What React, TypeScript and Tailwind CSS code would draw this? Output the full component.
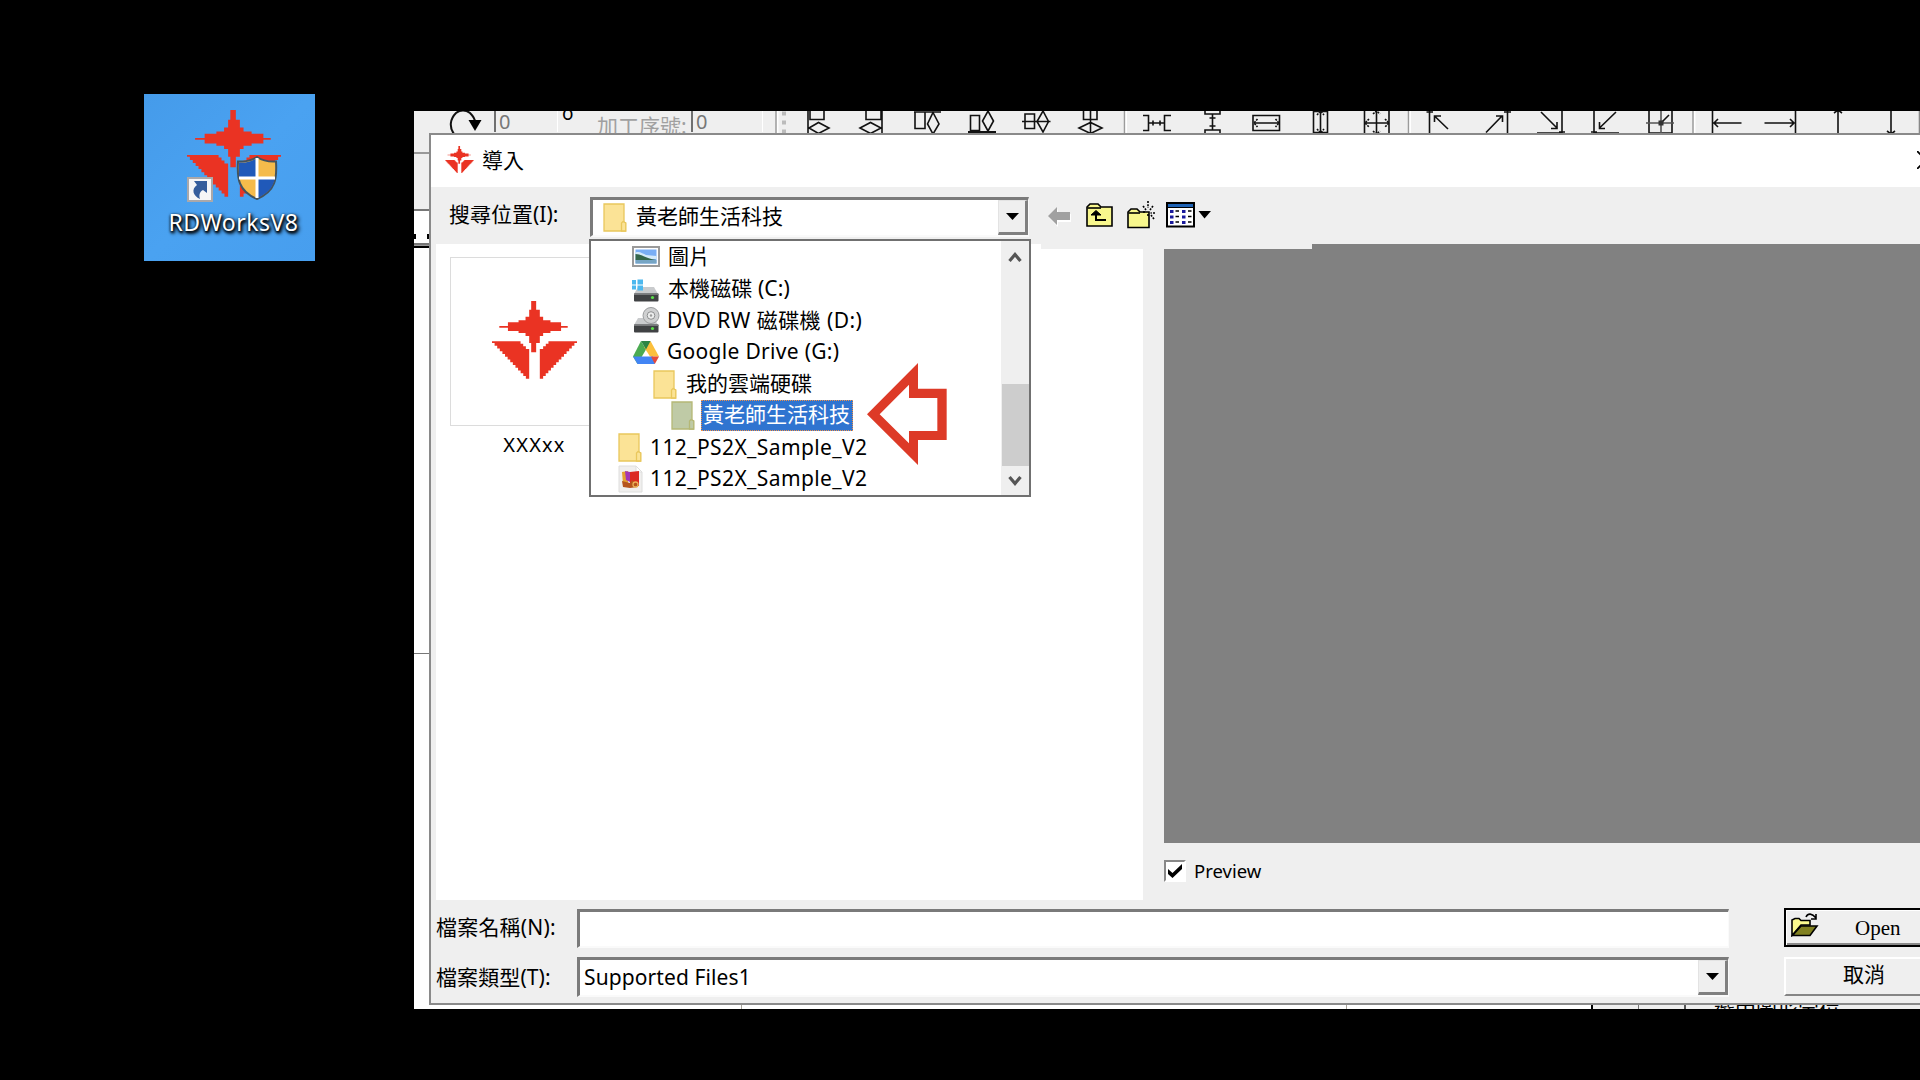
import React, { ReactNode } from "react";

const STAR =
  "394,242 409,242 409,268 420,268 420,289 430,289 430,300 452,300 452,306 484,306 484,317 504,317 504,322 484,322 484,332 452,332 452,338 430,338 430,347 420,347 420,368 409,368 409,396 394,396 394,368 388,368 388,347 377,347 377,338 356,338 356,332 324,332 324,322 298,322 298,317 324,317 324,306 356,306 356,300 377,300 377,289 388,289 388,268 394,268";

const wing = (() => {
  let pts = "388,475 388,386 378,386 378,378 370,378 370,370 362,370 362,363 276,363";
  const n = 13;
  for (let i = 0; i < n; i++) {
    const x = 276 + (i * 102) / n;
    const y = 368 + (i * 107) / n;
    pts += ` ${x},${y} ${x + 102 / n},${y}`;
  }
  return pts + " 378,475";
})();

function Logo({ className }: { className: string }) {
  return (
    <svg className={className} viewBox="276 242 256 234" preserveAspectRatio="none" fill="#ea3323">
      <polygon points={STAR} />
      <polygon points={wing} />
      <polygon points={wing} transform="translate(808 0) scale(-1 1)" />
    </svg>
  );
}

function Folder({ open = false }: { open?: boolean }) {
  const fill = open ? "#bfcaa6" : "#fbe396";
  const edge = open ? "#b5b876" : "#e9c75c";
  return (
    <svg className="h-[29px] w-[24px] shrink-0" viewBox="0 0 24 29">
      <path d="M1 1H21V19L22.5 20V28H1Z" fill={fill} stroke={edge} strokeWidth="1.3" />
      <path d="M18.5 28V20L20 18.5L22.8 20V28Z" fill={fill} stroke={edge} strokeWidth="1.3" />
    </svg>
  );
}

function PictureIcon() {
  return (
    <svg className="h-[21px] w-[28px] shrink-0" viewBox="0 0 28 21">
      <rect x="1" y="1" width="26" height="19" fill="#fff" stroke="#9a9a9a" strokeWidth="2" />
      <rect x="3.5" y="3.5" width="21" height="14" fill="#79aef5" />
      <path d="M3.5 6.500C8 5 11 8 14 9L24.500 10V13H3.500Z" fill="#d3e9fa" />
      <path d="M3.500 8C9 8 13 12 24 14H3.500Z" fill="#35664b" />
      <path d="M3.500 14H24.500V17.500H3.500Z" fill="#76a5c4" />
    </svg>
  );
}

function DriveIcon({ kind }: { kind: "win" | "dvd" }) {
  return (
    <svg className="h-[26px] w-[28px] shrink-0" viewBox="0 0 28 26">
      <path d="M6 11H22L26 18H2Z" fill="#c9cbcd" />
      <rect x="2" y="17.500" width="24.500" height="8" rx="1" fill="#404244" />
      <rect x="2" y="17.500" width="24.500" height="1.500" fill="#77797b" />
      <circle cx="20.500" cy="21.500" r="1.600" fill="#5be04a" />
      {kind === "win" ? (
        <g fill="#4db8ee">
          <rect x="0" y="4" width="4" height="4.500" />
          <rect x="5.500" y="3.500" width="5.500" height="5" />
          <rect x="0" y="9.500" width="4" height="4" />
          <rect x="5.500" y="9.500" width="5.500" height="5" />
        </g>
      ) : (
        <g>
          <circle cx="19" cy="8.500" r="8" fill="#cfd0d1" stroke="#9a9c9e" />
          <circle cx="19" cy="8.500" r="3.800" fill="#eceded" stroke="#8d8f90" />
          <circle cx="19" cy="8.500" r="1.200" fill="#9a9a9a" />
        </g>
      )}
    </svg>
  );
}

function GoogleDrive() {
  return (
    <svg className="h-[25px] w-[28px] shrink-0" viewBox="0 0 28 25">
      <path d="M9 1L14 9.500L5.500 24L1 16.500Z" fill="#4bab52" />
      <path d="M18.500 1L27 16.500H18L12 7Z" fill="#fbbf3c" />
      <path d="M9 1H18.500L14 9.500Z" fill="#2d8544" />
      <path d="M1 16.500H21L23 24H5.500Z" fill="#4285f4" />
      <path d="M19 16.500H27L22.800 24Z" fill="#e5493a" />
    </svg>
  );
}

function ZipIcon() {
  return (
    <svg className="h-[28px] w-[25px] shrink-0" viewBox="0 0 25 28">
      <path d="M1 1H18L24 7V27H1Z" fill="#f0efee" stroke="#dededd" />
      <path d="M18 1V7H24Z" fill="#fff" stroke="#dededd" />
      <path d="M4 7L10 6V20L5 19Z" fill="#e3a02f" />
      <path d="M7 6L12 7V17L8 15Z" fill="#a335b5" />
      <path d="M12 7L21 6V21L12 20Z" fill="#dc2a22" />
      <path d="M4 16L12 18L14 15L17 18L20 19V22L12 23L5 22Z" fill="#b5541d" />
      <circle cx="17.500" cy="19.500" r="2.500" fill="none" stroke="#eab257" strokeWidth="1.300" />
    </svg>
  );
}

/* Toolbar glyphs: every cell is a slice of one drawing space whose top is y=111. */
function Cell({ x, to, children }: { x: number; to: number; children?: ReactNode }) {
  return (
    <svg
      className="h-[22px] shrink-0"
      width={to - x}
      viewBox={`${x} 111 ${to - x} 22`}
      fill="none"
      stroke="#111"
      strokeWidth="1.6"
    >
      {children}
    </svg>
  );
}
const Sep = ({ x }: { x: number }) => (
  <>
    <path d={`M${x} 111V134`} stroke="#9b9b9b" strokeWidth="1.5" />
    <path d={`M${x + 1.700} 111V134`} stroke="#fff" strokeWidth="1.5" />
  </>
);

function Toolbar() {
  return (
    <div className="ml-[16px] flex h-[22px] overflow-hidden bg-[#efefef]">
      <Cell x={430} to={494}>
        <path d="M454 134C449 127 450 119 456 113Q463 108 470 113Q475 118 475 122" strokeWidth="2" />
        <path d="M468.500 120H481.500L475 131Z" fill="#000" stroke="none" />
      </Cell>
      <div className="flex h-[21px] w-[64px] border-r border-l-2 border-r-white border-l-[#707070] pl-[3px] font-['Noto_Sans'] text-[20px] leading-[22px] text-[#777]">0</div>
      <div className="w-[39px] pl-[4px] font-['Noto_Sans'] text-[19px] leading-[5px] text-black">o</div>
      <div className="h-[22px] w-[94px] overflow-hidden whitespace-nowrap font-['Noto_Sans','Noto_Sans_CJK_TC',sans-serif] text-[21px] leading-[30px] text-[#a0a0a0]">加工序號:</div>
      <div className="flex h-[21px] w-[72px] border-r border-l-2 border-r-white border-l-[#707070] pl-[3px] font-['Noto_Sans'] text-[20px] leading-[22px] text-[#777]">0</div>
      <Cell x={763} to={800}>
        <Sep x={776} />
        <path d="M782 113.500H786M782 122.500H786M782 131.500H786" stroke="#bbb" strokeWidth="4" />
      </Cell>
      <Cell x={800} to={845}>
        <path d="M808 111V134M810 111V119.500H824V111M809 128L818.500 122.500L829 128L818.500 133.500Z" />
      </Cell>
      <Cell x={845} to={900}>
        <path d="M882 111V134M866 111V119.500H881V111M860 128L870.500 122.500L881 128L870.500 133.500Z" />
      </Cell>
      <Cell x={900} to={955}>
        <path d="M914 112H941M915 112V128.500H925V112M933 112.500L939 124L933 134L927.500 124Z" />
      </Cell>
      <Cell x={955} to={1010}>
        <path d="M970.500 115.500H979.500V130.500H970.500ZM988 111L993.500 121L988 131L982.500 121Z" />
        <path d="M968 132H996" strokeWidth="2" />
      </Cell>
      <Cell x={1010} to={1065}>
        <path d="M1025 114H1034.500V128.500H1025ZM1043 111L1048.500 121.500L1043 132L1037 121.500ZM1022 121.500H1050.500" />
      </Cell>
      <Cell x={1065} to={1135}>
        <path d="M1083.500 111V119.500H1097V111M1079 128L1090.500 122.500L1102 128L1090.500 133.500ZM1090.500 111V134" />
        <Sep x={1124.500} />
      </Cell>
      <Cell x={1135} to={1190}>
        <path d="M1143 115.500H1148.500V130.500H1143M1171 115.500H1164.500V130.500H1171M1149 123H1164M1153 120.500V125.500M1160 120.500V125.500" />
      </Cell>
      <Cell x={1190} to={1240}>
        <path d="M1205 111V114H1220V111M1205 134V130H1220V134M1212.500 114V130M1209.500 118H1215.500M1209.500 126H1215.500" />
      </Cell>
      <Cell x={1240} to={1300}>
        <path d="M1253 115.500H1279.500V130.500H1253ZM1254 123H1279" />
        <path d="M1257.500 119L1254 123L1257.500 127M1275.500 119L1279 123L1275.500 127" strokeDasharray="2 1" />
      </Cell>
      <Cell x={1300} to={1350}>
        <path d="M1313.500 111V134M1327.500 111V134M1320.500 111V134M1313 132.500H1328M1313 111.500H1328" />
        <path d="M1317 115L1320.500 111L1324 115M1317 129L1320.500 133L1324 129" strokeDasharray="2 1" />
      </Cell>
      <Cell x={1350} to={1420}>
        <path d="M1364.500 111V134M1389 111V134M1376.500 111V134M1365 123H1389" />
        <path d="M1369 119L1365 123L1369 127M1385 119L1389 123L1385 127M1373 114L1376.500 111L1380 114M1373 131L1376.500 134L1380 131" strokeDasharray="2 1" />
        <Sep x={1408.500} />
      </Cell>
      <Cell x={1420} to={1470}>
        <path d="M1429.500 111V134M1426.500 112H1433M1434.500 122V116H1441M1434.500 116L1448 129" />
      </Cell>
      <Cell x={1470} to={1525}>
        <path d="M1507.500 111V134M1504 112H1511M1486 132.500L1502 116M1496 116H1502.500V122" />
      </Cell>
      <Cell x={1525} to={1580}>
        <path d="M1562 111V134M1559 132H1565M1537 133H1562M1541 112L1557 128M1557 122V128.500H1551" />
      </Cell>
      <Cell x={1580} to={1635}>
        <path d="M1594 111V134M1591 132H1597M1594 133H1619M1616 112L1599.500 128M1599.500 122V128.500H1605" />
      </Cell>
      <Cell x={1635} to={1703}>
        <path d="M1649 111V134M1672 111V134M1649 133H1672M1661 123L1669 115" />
        <path d="M1661 111V134M1646 123H1674" stroke="#555" />
        <rect x="1658.500" y="120.500" width="5" height="5" fill="#333" stroke="none" />
        <Sep x={1693} />
      </Cell>
      <Cell x={1703} to={1755}>
        <path d="M1712.500 111V134M1713 123H1741.500M1718 119L1714 123L1718 127" />
      </Cell>
      <Cell x={1755} to={1815}>
        <path d="M1795.500 111V134M1764.500 123H1794M1790 119L1794 123L1790 127" />
      </Cell>
      <Cell x={1815} to={1865}>
        <path d="M1838 111V134M1834 113L1838 110L1842 113" />
      </Cell>
      <Cell x={1865} to={1920}>
        <path d="M1891 111V134M1887 131L1891 134L1895 131" />
        <path d="M1919.500 111V134" stroke="#888" />
      </Cell>
    </div>
  );
}

function DropButton() {
  return (
    <div className="flex w-[30px] items-center justify-center border-r-[3px] border-b-[3px] border-t border-l border-t-[#e3e3e3] border-l-[#e3e3e3] border-r-[#808080] border-b-[#808080] bg-[#efefef]">
      <svg className="h-[7px] w-[13px]" viewBox="0 0 13 7">
        <path d="M0 0H13L6.500 7Z" />
      </svg>
    </div>
  );
}

const rows: { indent: string; icon: ReactNode; label: string; text: string; active?: boolean }[] = [
  { indent: "pl-[41px]", icon: <PictureIcon />, label: "圖片", text: "ml-[8px]" },
  { indent: "pl-[41px]", icon: <DriveIcon kind="win" />, label: "本機磁碟 (C:)", text: "ml-[8px] tracking-[0.1px]" },
  { indent: "pl-[41px]", icon: <DriveIcon kind="dvd" />, label: "DVD RW 磁碟機 (D:)", text: "ml-[7px] tracking-[0.45px]" },
  { indent: "pl-[41px]", icon: <GoogleDrive />, label: "Google Drive (G:)", text: "ml-[7px] tracking-[0.3px]" },
  { indent: "pl-[62px]", icon: <Folder />, label: "我的雲端硬碟", text: "ml-[9px]" },
  { indent: "pl-[80px]", icon: <Folder open />, label: "黃老師生活科技", text: "ml-[6px]", active: true },
  { indent: "pl-[27px]", icon: <Folder />, label: "112_PS2X_Sample_V2", text: "ml-[8px] tracking-[0.4px]" },
  { indent: "pl-[27px]", icon: <ZipIcon />, label: "112_PS2X_Sample_V2", text: "ml-[7px] tracking-[0.4px]" },
];

function LocationList() {
  return (
    <div className="absolute top-[52px] left-[158px] z-10 flex h-[258px] w-[442px] border-2 border-[#707070] bg-white">
      <div className="min-w-0 flex-1">
        {rows.map((r, i) => (
          <div key={i} className={"flex h-[31.8px] items-center " + r.indent}>
            {r.icon}
            {r.active ? (
              <span className={"h-[31px] w-[152px] whitespace-nowrap border border-dotted border-[#f0924a] bg-[#2f74d0] pl-[1px] leading-[27px] text-white " + r.text}>
                {r.label}
              </span>
            ) : (
              <span className={"mb-[2px] whitespace-nowrap leading-[30px] " + r.text}>{r.label}</span>
            )}
          </div>
        ))}
      </div>
      <div className="flex w-[28px] flex-col items-center bg-[#efefef]">
        <svg className="mt-[10px] h-[12px] w-[14px]" viewBox="0 0 14 12" fill="none" stroke="#555" strokeWidth="3.200">
          <path d="M1.500 10L7 3.500L12.500 10" />
        </svg>
        <div className="mt-[121px] h-[82px] w-[27px] bg-[#cdcdcd]" />
        <svg className="mt-[9px] h-[12px] w-[14px]" viewBox="0 0 14 12" fill="none" stroke="#555" strokeWidth="3.200">
          <path d="M1.500 2L7 8.500L12.500 2" />
        </svg>
      </div>
      <svg className="absolute top-[122px] left-[276px] h-[102px] w-[80px]" viewBox="864 402 240 306">
        <path d="M864 556L1017 402V479H1103V633H1017V708ZM902 556L990 643V606H1075V507H990V467Z" fill="#dd3a27" fillRule="evenodd" />
      </svg>
    </div>
  );
}

function HeaderTools() {
  return (
    <div className="mt-[12px] ml-[19px] flex">
      <svg className="mt-[8px] h-[20px] w-[23px]" viewBox="0 0 23 20">
        <path d="M1 10.500L10 2V7H23V15H10V20Z" fill="#fff" />
        <path d="M0 9L9 0V5H22V13H9V18Z" fill="#a0a0a0" />
      </svg>
      <svg className="mt-[4px] ml-[15px] h-[24px] w-[27px]" viewBox="0 0 27 24" stroke="#000" strokeWidth="1.600">
        <path d="M1 23V4L4 1H12L15 4H26V23Z" fill="#f8f78d" />
        <path d="M1.500 5H15" />
        <path d="M5 12L10 7.500L15 12Z" strokeWidth="1" />
        <path d="M10 12V17H20" strokeWidth="2" fill="none" />
      </svg>
      <svg className="mt-[2px] ml-[14px] h-[28px] w-[30px]" viewBox="0 0 30 28" stroke="#000" strokeWidth="1.600">
        <path d="M1 26.500V11L4 8H10L13 11H22V26.500Z" fill="#f8f78d" />
        <path d="M1.500 12H13" />
        <path d="M21 0V7M16 5L19 9M26 5L23 9M28 12H23.500M27 18L24 14M16 11H19M21 13V16" strokeDasharray="2 1.200" />
      </svg>
      <svg className="mt-[3px] ml-[9px] h-[26px] w-[46px]" viewBox="0 0 46 26">
        <rect x="1" y="1" width="27" height="23.500" fill="#fff" stroke="#000" strokeWidth="2" />
        <rect x="2" y="2" width="25" height="3" fill="#1f63b5" />
        <path d="M2 5.500H27" stroke="#000" />
        <path d="M4 9.500H7.500M4 15H7.500M4 20.500H7.500M16 9.500H19.500M16 15H19.500M16 20.500H19.500" stroke="#1a1a9c" strokeWidth="3" />
        <path d="M9.500 9H13M9.500 14.500H13M9.500 20H13M22 9H25.500M22 14.500H25.500M22 20H25.500" stroke="#000" strokeWidth="1.600" />
        <path d="M32.500 9H45L38.500 16.500Z" />
      </svg>
    </div>
  );
}

function Desktop() {
  return (
    <div className="mt-[94px] ml-[144px] flex h-[167px] w-[171px] flex-col items-center bg-[#4aa0ef] bg-gradient-to-br from-[#459bea] via-[#4aa2f1] to-[#479eee]">
      <div className="relative mt-[16px] mr-[-8px] h-[92px] w-[94px]">
        <Logo className="h-[87px] w-[94px]" />
        <svg className="absolute top-[67px] left-0 h-[25px] w-[26px]" viewBox="0 0 26 25">
          <rect x="1" y="1" width="24" height="23" fill="#f5f5f7" stroke="#aaa8aa" strokeWidth="2" />
          <path d="M7 4H20V16L16 13C12 15 12 19 13 22C6 19 4 12 10 8Z" fill="#345c9c" />
        </svg>
        <svg className="absolute top-[46px] left-[49px] h-[44px] w-[42px]" viewBox="0 0 42 44">
          <path d="M21 1C15 5 9 6 2 5.500C1 22 2 35 21 43C40 35 41 22 40 5.500C33 6 27 5 21 1Z" fill="#f5bb4b" stroke="#44545e" strokeWidth="2" />
          <path d="M21 2C15 6 9 7 3 6.500V22H21Z" fill="#2059b9" />
          <path d="M21 22H39C37 32 31 38 21 42Z" fill="#2059b9" />
          <path d="M21 2V42M3 22H39" stroke="#fff" strokeWidth="3" />
        </svg>
      </div>
      <div className="mt-[3px] ml-[8px] whitespace-nowrap font-['Noto_Sans',sans-serif] text-[23px] leading-[34px] tracking-[0.5px] text-white [text-shadow:1px_2px_3px_#000,0_1px_3px_#000,2px_2px_4px_#000]">
        RDWorksV8
      </div>
    </div>
  );
}

function LeftStrip() {
  return (
    <div className="flex w-[15px] shrink-0 flex-col bg-white">
      <div className="h-[19px] bg-[#efefef]" />
      <div className="h-[59px] border-t-2 border-b-2 border-t-[#999] border-b-[#777] bg-[#efefef]" />
      <div className="flex h-[32px] items-end justify-between pb-[4px]">
        <div className="h-[5px] w-[2px] bg-black" />
        <div className="h-[5px] w-[2px] bg-black" />
      </div>
      <div className="h-[5px] border-t-2 border-b-2 border-t-[#777] border-b-black bg-[#999]" />
      <div className="h-[405px]" />
      <div className="h-px bg-[#777]" />
    </div>
  );
}

const sunken = "border-t-[3px] border-l-[3px] border-r-[1px] border-b-2 border-t-[#7a7a7a] border-l-[#7a7a7a] border-r-[#fafafa] border-b-[#fafafa] bg-white";

export default function App() {
  return (
    <div className="flex h-[1080px] w-[1920px] overflow-hidden bg-black font-['Noto_Sans','Noto_Sans_CJK_TC',sans-serif] text-[21px] text-black">
      <div className="w-[414px] shrink-0">
        <Desktop />
      </div>
      <div className="mt-[111px] flex h-[898px] w-[1506px] flex-col overflow-hidden bg-[#efefef]">
        <Toolbar />
        <div className="flex h-[872px]">
          <LeftStrip />
          <div className="flex min-w-0 flex-1 flex-col border-t-2 border-b-2 border-l-2 border-[#8a8a8a] bg-[#efefef]">
            <div className="flex h-[52px] shrink-0 items-center justify-between overflow-hidden bg-white pb-[2px] pl-[14px]">
              <div className="flex items-center">
                <Logo className="mb-[2px] h-[27px] w-[29px]" />
                <span className="ml-[8px] leading-[30px]">導入</span>
              </div>
              <svg className="h-[18px] w-[3px]" viewBox="0 0 3 18" fill="none" stroke="#000" strokeWidth="1.800">
                <path d="M0 0L9 9L0 18" />
              </svg>
            </div>
            <div className="relative flex h-[57px] shrink-0">
              <span className="mt-[12px] w-[141px] shrink-0 pl-[18px] leading-[30px] whitespace-nowrap">搜尋位置(I):</span>
              <div className={"mt-[10px] ml-[18px] flex h-[40px] w-[439px] shrink-0 " + sunken}>
                <div className="flex flex-1 items-center pl-[10px]">
                  <Folder />
                  <span className="mb-[3px] ml-[9px] leading-[30px]">黃老師生活科技</span>
                </div>
                <DropButton />
              </div>
              <HeaderTools />
              <LocationList />
            </div>
            <div className="flex h-[656px] shrink-0 pl-[5px]">
              <div className="w-[707px] shrink-0 bg-white">
                <div className="flex h-[13px] justify-end">
                  <div className="h-[5px] w-[102px] bg-[#efefef]" />
                </div>
                <div className="ml-[14px] flex h-[169px] w-[169px] items-center justify-center border border-[#dcdcdc] pb-[3px]">
                  <Logo className="h-[78px] w-[85px]" />
                </div>
                <div className="ml-[14px] w-[169px] text-center text-[20px] leading-[38px] tracking-[1.200px]">XXXxx</div>
              </div>
              <div className="ml-[21px] flex-1">
                <div className="h-[599px] bg-[#818181]">
                  <div className="h-[5px] w-[148px] bg-[#efefef]" />
                </div>
                <div className="mt-[16px] flex items-center">
                  <div className="flex h-[22px] w-[22px] items-center justify-center border-2 border-t-[#888] border-l-[#888] border-r-white border-b-white bg-white">
                    <svg className="h-[14px] w-[14px]" viewBox="0 0 14 14">
                      <path d="M0 5V10L4.500 14L14 5V0L4.500 9Z" />
                    </svg>
                  </div>
                  <span className="ml-[8px] text-[18.5px] leading-[24px]">Preview</span>
                </div>
              </div>
            </div>
            <div className="flex flex-1">
              <div className="w-[146px] shrink-0 pl-[5px]">
                <div className="mt-[12px] leading-[30px] tracking-[0.200px] whitespace-nowrap">檔案名稱(N):</div>
                <div className="mt-[20px] leading-[30px] tracking-[0.100px] whitespace-nowrap">檔案類型(T):</div>
              </div>
              <div className="w-[1152px] shrink-0">
                <div className={"mt-[9px] h-[39px] " + sunken} />
                <div className={"mt-[9px] flex h-[40px] " + sunken}>
                  <span className="flex-1 pl-[4px] leading-[34px] tracking-[0.100px]">Supported Files1</span>
                  <DropButton />
                </div>
              </div>
              <div className="ml-[55px] flex-1">
                <div className="mt-[8px] flex h-[39px] items-center border-2 border-r-0 border-black bg-[#efefef] shadow-[inset_1px_1px_0_#fff,inset_0_-2px_0_#8a8a8a]">
                  <svg className="mb-[6px] ml-[5px] h-[24px] w-[28px]" viewBox="0 0 28 24" stroke="#000" strokeWidth="1.600">
                    <path d="M1 22.500V7L4 5.500H8L10 7.500H19V12H10L1 22.500Z" fill="#fbfa8e" />
                    <path d="M1.500 22.500L10 13H26L19 22.500Z" fill="#808020" />
                    <path d="M15 4C17 0 21 0 25 5M25 1V6H20" fill="none" />
                  </svg>
                  <span className="ml-[36px] font-['Liberation_Serif','Noto_Serif',serif] text-[21px] leading-[30px]">Open</span>
                </div>
                <div className="mt-[10px] h-[39px] border-t-2 border-b-2 border-l-2 border-t-white border-b-[#858585] border-l-white bg-[#efefef] pl-[57px] leading-[31px]">取消</div>
              </div>
            </div>
          </div>
        </div>
        <div className="flex h-[4px] overflow-hidden bg-white">
          <div className="w-[328px] shrink-0 border-r border-[#aaa69c]" />
          <div className="w-[605px] shrink-0 border-r border-[#aaa69c]" />
          <div className="w-[246px] shrink-0 border-r-2 border-black" />
          <div className="w-[46px] shrink-0 border-r border-[#777] bg-[#efefef]" />
          <div className="w-[47px] shrink-0 border-r-2 border-[#555] bg-[#efefef]" />
          <div className="flex-1 bg-[#efefef] pl-[28px]">
            <div className="mt-[-7px] leading-[24px] whitespace-nowrap">選中圖形定位</div>
          </div>
        </div>
      </div>
    </div>
  );
}
